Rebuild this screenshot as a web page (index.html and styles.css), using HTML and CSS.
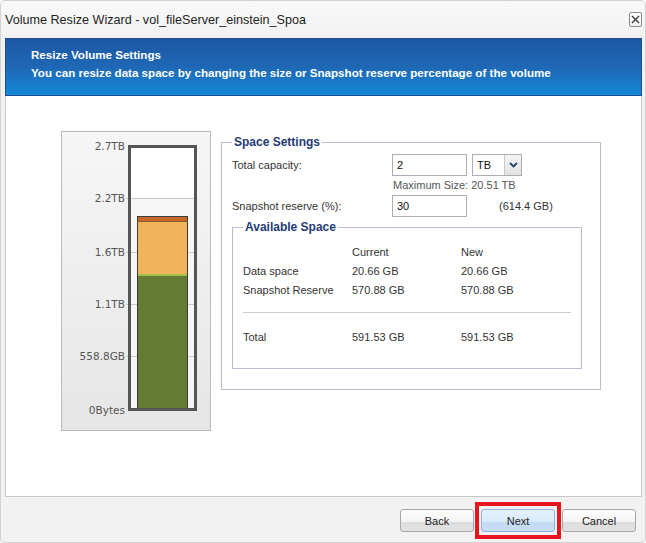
FILE: index.html
```html
<!DOCTYPE html>
<html>
<head>
<meta charset="utf-8">
<link rel="stylesheet" href="styles.css">
</head>
<body>
<div class="window">
  <div class="titlebar">
    <span class="title">Volume Resize Wizard - vol_fileServer_einstein_Spoa</span>
    <span class="close"><svg width="9" height="9" viewBox="0 0 9 9"><path d="M1 1L8 8M8 1L1 8" stroke="#3c3c3c" stroke-width="1.4"/></svg></span>
  </div>
  <div class="main">
    <div class="banner">
      <div class="banner-title">Resize Volume Settings</div>
      <div class="banner-sub">You can resize data space by changing the size or Snapshot reserve percentage of the volume</div>
    </div>
    <div class="body">
      <div class="chart">
        <svg width="148" height="298" viewBox="0 0 148 298">
          <rect x="68" y="15" width="66" height="51" fill="#ffffff"/>
          <rect x="68" y="66" width="66" height="211" fill="#f6f6f6"/>
          <g stroke="#c9c9c9" stroke-width="1">
            <line x1="64" y1="66.5" x2="134" y2="66.5"/>
            <line x1="64" y1="120.5" x2="134" y2="120.5"/>
            <line x1="64" y1="172.5" x2="134" y2="172.5"/>
            <line x1="64" y1="224.5" x2="134" y2="224.5"/>
          </g>
          <rect x="75" y="144" width="51" height="134" fill="#657a33"/>
          <rect x="75" y="142" width="51" height="2" fill="#9dc24a"/>
          <rect x="75" y="89" width="51" height="53" fill="#f2b45a"/>
          <rect x="75" y="84" width="51" height="5" fill="#c9662a"/>
          <rect x="75.5" y="84.5" width="50" height="193" fill="none" stroke="#3a3a3a" stroke-width="1"/>
          <line x1="75" y1="89.5" x2="126" y2="89.5" stroke="#8a5a2a" stroke-width="1"/>
          <rect x="67.5" y="14.5" width="66" height="263" fill="none" stroke="#555555" stroke-width="3"/>
          <g class="axis" text-anchor="end">
            <text x="63" y="14">2.7TB</text>
            <text x="63" y="66">2.2TB</text>
            <text x="63" y="120">1.6TB</text>
            <text x="63" y="172">1.1TB</text>
            <text x="63" y="224">558.8GB</text>
            <text x="63" y="278">0Bytes</text>
          </g>
        </svg>
      </div>
      <fieldset class="settings">
        <legend>Space Settings</legend>
        <div class="row">
          <label class="lbl">Total capacity:</label>
          <input class="field" type="text" value="2">
          <div class="select"><span class="sel-text">TB</span><span class="sel-arrow"><svg width="9" height="6" viewBox="0 0 9 6"><path d="M1 1L4.5 4.5L8 1" fill="none" stroke="#28406a" stroke-width="1.8"/></svg></span></div>
        </div>
        <div class="hint">Maximum Size: 20.51 TB</div>
        <div class="row">
          <label class="lbl">Snapshot reserve (%):</label>
          <input class="field" type="text" value="30">
          <span class="reserve">(614.4 GB)</span>
        </div>
        <fieldset class="avail">
          <legend>Available Space</legend>
          <div class="grid">
            <span></span><span>Current</span><span>New</span>
            <span>Data space</span><span>20.66 GB</span><span>20.66 GB</span>
            <span>Snapshot Reserve</span><span>570.88 GB</span><span>570.88 GB</span>
          </div>
          <div class="sep"></div>
          <div class="grid">
            <span>Total</span><span>591.53 GB</span><span>591.53 GB</span>
          </div>
        </fieldset>
      </fieldset>
    </div>
  </div>
  <div class="footer">
    <button class="btn">Back</button>
    <div class="highlight"><button class="btn primary">Next</button></div>
    <button class="btn">Cancel</button>
  </div>
</div>
</body>
</html>
```

FILE: styles.css
```css
html, body {
  margin: 0;
  padding: 0;
  background: #ffffff;
}
body {
  font-family: "Liberation Sans", Arial, sans-serif;
  font-size: 11px;
  color: #222;
}
.window {
  width: 646px;
  height: 543px;
  box-sizing: border-box;
  border: 1px solid #d2d2d2;
  border-radius: 5px 5px 4px 4px;
  background: linear-gradient(#f9f9f9 0px, #f1f1f1 38px, #f2f2f2 100%);
  display: flex;
  flex-direction: column;
}
.titlebar {
  height: 37px;
  display: flex;
  align-items: center;
  justify-content: space-between;
  padding-left: 4px;
  padding-right: 3px;
}
.title {
  font-size: 12.6px;
  color: #1e1e1e;
  margin-top: 1px;
}
.close {
  width: 11px;
  height: 13px;
  border: 1px solid #8c8c8c;
  border-radius: 2px;
  background: linear-gradient(#ffffff, #ececec);
  display: flex;
  align-items: center;
  justify-content: center;
  margin-top: -1px;
}
.main {
  margin: 0 3px 0 4px;
  display: flex;
  flex-direction: column;
}
.banner {
  height: 58px;
  box-sizing: border-box;
  border: 1px solid #1b4f92;
  background: linear-gradient(#1c57a3 0%, #1f68b5 50%, #1488d6 100%);
  color: #ffffff;
  font-weight: bold;
  font-size: 11.6px;
  padding: 9px 0 0 25px;
}
.banner-title {
  line-height: 14px;
}
.banner-sub {
  line-height: 14px;
  margin-top: 4px;
}
.body {
  height: 401px;
  box-sizing: border-box;
  background: #ffffff;
  border: 1px solid #c9c9c9;
  border-top: none;
  display: flex;
  align-items: flex-start;
  padding: 35px 0 0 55px;
}
.chart {
  width: 148px;
  height: 298px;
  border: 1px solid #b9b9b9;
  background: linear-gradient(#f6f6f6, #e6e6e6);
}
.chart svg {
  display: block;
}
.axis text {
  font-family: "DejaVu Sans", Verdana, sans-serif;
  font-size: 10.5px;
  fill: #555555;
  dominant-baseline: central;
}
fieldset {
  margin: 0;
  border: 1px solid #b9bccb;
}
legend {
  font-weight: bold;
  font-size: 12px;
  color: #1f3c74;
  padding: 0 2px;
  line-height: 14px;
}
.settings {
  width: 380px;
  box-sizing: border-box;
  margin-left: 10px;
  margin-top: 4px;
  padding: 5px 10px 20px 10px;
  display: block;
}
.row {
  display: flex;
  align-items: center;
  height: 22px;
}
.lbl {
  width: 160px;
  color: #333;
}
.field {
  width: 75px;
  height: 22px;
  box-sizing: border-box;
  border: 1px solid #abadb3;
  padding: 0 4px;
  margin: 0;
  font-family: "Liberation Sans", Arial, sans-serif;
  font-size: 11px;
  color: #111;
  outline: none;
}
.select {
  margin-left: 5px;
  width: 50px;
  height: 22px;
  box-sizing: border-box;
  border: 1px solid #abadb3;
  display: flex;
}
.sel-text {
  flex: 1;
  padding-left: 4px;
  line-height: 20px;
  color: #111;
}
.sel-arrow {
  width: 16px;
  border-left: 1px solid #c9c9c9;
  background: linear-gradient(#f4f4f4, #e2e2e2);
  display: flex;
  align-items: center;
  justify-content: center;
}
.hint {
  color: #555;
  margin: 2px 0 3px 161px;
  line-height: 14px;
}
.reserve {
  margin-left: 32px;
  color: #333;
}
.avail {
  margin-top: 3px;
  padding: 8px 10px 22px 10px;
  width: 350px;
  box-sizing: border-box;
}
.grid {
  display: grid;
  grid-template-columns: 109px 109px 1fr;
  grid-auto-rows: 19px;
  align-items: center;
  color: #333;
}
.sep {
  height: 1px;
  background: #cccccc;
  margin: 13px 0 14px 0;
}
.footer {
  flex: 1;
  display: flex;
  justify-content: flex-end;
  align-items: flex-start;
  padding: 12px 9px 0 0;
  gap: 7px;
}
.btn {
  width: 74px;
  height: 23px;
  box-sizing: border-box;
  border: 1px solid #a8a8a8;
  border-radius: 3px;
  background: linear-gradient(#fdfdfd 0%, #f3f3f3 55%, #dcdcdc 56%, #e2e2e2 100%);
  font-family: "Liberation Sans", Arial, sans-serif;
  font-size: 11px;
  color: #222;
  padding: 0;
  margin: 0;
  display: block;
}
.highlight {
  border: 4px solid #e8141e;
  padding: 3px 2px;
  margin: -7px -6px;
}
.primary {
  border-color: #8fb2d8;
  background: linear-gradient(#e6f2fd 0%, #d8eafb 55%, #c3dbf4 56%, #c7ddf3 100%);
}
```
